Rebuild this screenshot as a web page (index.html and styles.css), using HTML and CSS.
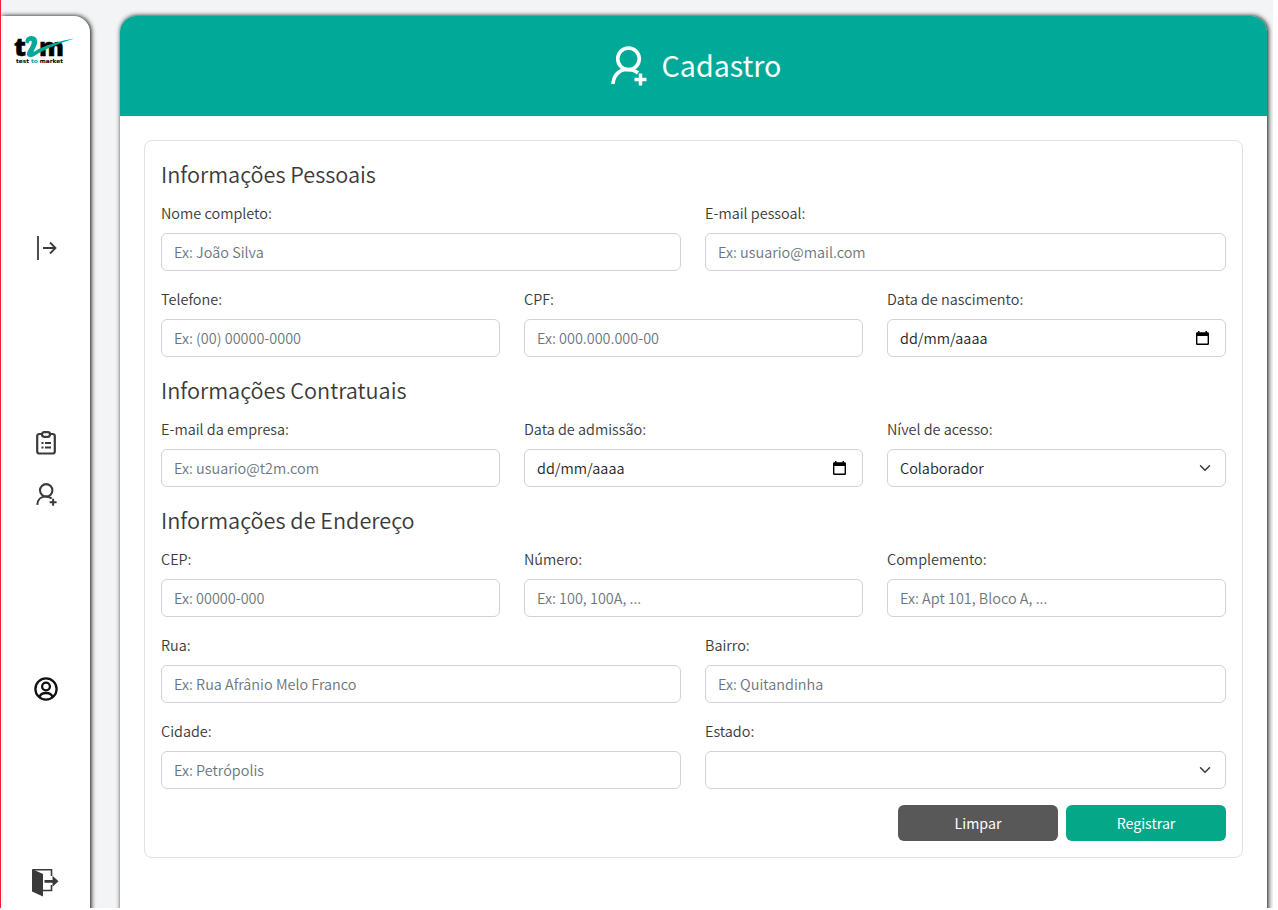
FILE: index.html
```html
<!DOCTYPE html>
<html lang="pt-BR">
<head>
<meta charset="utf-8">
<title>Cadastro</title>
<link rel="stylesheet" href="styles.css">
</head>
<body>
<svg class="defs" width="0" height="0">
  <symbol id="user-add" viewBox="0 0 36 40">
    <g fill="none" stroke="currentColor">
      <circle cx="17.5" cy="12.8" r="10.8" stroke-width="3.6"/>
      <path d="M2 38C2.500 29 8.500 23.500 16 23.500C20.500 23.500 24 24.500 27 27" stroke-width="3.6"/>
      <path d="M29.500 27.500v12M23.500 33.500h12" stroke-width="3.400"/>
    </g>
  </symbol>
  <symbol id="calendar" viewBox="0 0 13 14">
    <path fill="#000" fill-rule="evenodd" d="M2 0h1.500v1.200h6V0H11v1.200h.7Q13 1.200 13 2.500v10.200Q13 14 11.700 14H1.300Q0 14 0 12.700V2.500Q0 1.200 1.300 1.200H2zM1.400 5v7.600h10.200V5z"/>
  </symbol>
  <symbol id="chevron" viewBox="0 0 16 16">
    <path d="M2 5l6 6 6-6" fill="none" stroke="#343a40" stroke-width="2" stroke-linecap="round" stroke-linejoin="round"/>
  </symbol>
</svg>
<div class="app">
  <nav class="sidebar">
    <svg class="logo" width="62" height="30" viewBox="0 0 62 30">
      <text class="logo-name" x="0" y="19.500" textLength="12" lengthAdjust="spacingAndGlyphs">t</text>
      <text class="logo-name" x="25" y="19.500" textLength="25" lengthAdjust="spacingAndGlyphs">m</text>
      <path fill="#00a998" d="M11.500 4.500C12 1.500 14.500 0 17.500 0C21.500 0 24 3 23 7.500C22.200 11 20 13.500 19.500 16C32 8.500 46 5 60.500 2.500C46 7 33 12 21 19.500C17 22 12.500 21.500 13 17.500C13.500 14 18 9.500 17.700 6C17.300 3.800 15 4.500 14.500 7.500C12.500 7.500 11.300 6.500 11.500 4.500z"/>
      <text class="logo-tag" x="2" y="27" textLength="47" lengthAdjust="spacingAndGlyphs">test <tspan fill="#00a998">to</tspan> market</text>
    </svg>
    <svg class="icon-expand" width="20" height="24" viewBox="0 0 20 24" fill="none" stroke="#3a3a3a" stroke-width="1.800"><path d="M1 0v24M6 12h13M13 6.500l5.500 5.500-5.500 5.500"/></svg>
    <div class="menu">
      <svg width="20" height="24" viewBox="0 0 20 24" fill="none" stroke="#3a3a3a" stroke-width="2.200"><path d="M6 3H3.500Q1.200 3 1.200 5v15.500Q1.200 22.500 3.500 22.500h13q2.300 0 2.300-2V5q0-2-2.300-2H14"/><rect x="6" y="1.200" width="8" height="4.600" rx="2.200"/><path d="M5.500 12h2M9 12h6M5.500 16.500h2M9 16.500h6"/></svg>
      <svg class="icon-user" width="21" height="23"><use href="#user-add"/></svg>
    </div>
    <svg class="icon-profile" width="24" height="24" viewBox="0 0 24 24" fill="none" stroke="#111" stroke-width="2.300"><circle cx="12" cy="12" r="10.600"/><circle cx="12" cy="9.500" r="3.900"/><path d="M5.500 20C6.500 16.800 9 16 12 16s5.500.8 6.500 4"/></svg>
    <svg class="icon-exit" width="27" height="29" viewBox="0 0 27 29"><path fill="#3a3a3a" d="M0 1l11 5v22.500L0 23.500z"/><path d="M1 1.700h18.500V8M19.500 17v5.500H11" fill="none" stroke="#3a3a3a" stroke-width="1.600"/><path fill="#3a3a3a" d="M12.500 12H20.500V7.800l6 5.500-6 5.500v-4H12.500z"/></svg>
  </nav>
  <main class="panel">
    <header class="header">
      <svg width="36" height="40"><use href="#user-add"/></svg>
      <h1>Cadastro</h1>
    </header>
    <form class="form">
      <h2>Informações Pessoais</h2>
      <div class="row halves">
        <label>Nome completo:<input placeholder="Ex: João Silva"></label>
        <label>E-mail pessoal:<input placeholder="Ex: usuario@mail.com"></label>
      </div>
      <div class="row">
        <label>Telefone:<input placeholder="Ex: (00) 00000-0000"></label>
        <label>CPF:<input placeholder="Ex: 000.000.000-00"></label>
        <label>Data de nascimento:<span class="field date">dd/mm/aaaa<svg width="13" height="14"><use href="#calendar"/></svg></span></label>
      </div>
      <h2>Informações Contratuais</h2>
      <div class="row">
        <label>E-mail da empresa:<input placeholder="Ex: usuario@t2m.com"></label>
        <label>Data de admissão:<span class="field date">dd/mm/aaaa<svg width="13" height="14"><use href="#calendar"/></svg></span></label>
        <label>Nível de acesso:<span class="field">Colaborador<svg width="16" height="12"><use href="#chevron"/></svg></span></label>
      </div>
      <h2>Informações de Endereço</h2>
      <div class="row">
        <label>CEP:<input placeholder="Ex: 00000-000"></label>
        <label>Número:<input placeholder="Ex: 100, 100A, ..."></label>
        <label>Complemento:<input placeholder="Ex: Apt 101, Bloco A, ..."></label>
      </div>
      <div class="row halves">
        <label>Rua:<input placeholder="Ex: Rua Afrânio Melo Franco"></label>
        <label>Bairro:<input placeholder="Ex: Quitandinha"></label>
      </div>
      <div class="row halves">
        <label>Cidade:<input placeholder="Ex: Petrópolis"></label>
        <label>Estado:<span class="field"><svg width="16" height="12"><use href="#chevron"/></svg></span></label>
      </div>
      <div class="actions">
        <button class="clear" type="button">Limpar</button>
        <button class="submit" type="button">Registrar</button>
      </div>
    </form>
  </main>
</div>
</body>
</html>
```
FILE: styles.css
```css
* { box-sizing: border-box; }
body { margin: 0; background: #fff; color: #3a3a3a; font: 350 14.45px/24px "Noto Sans CJK JP", "Noto Sans", sans-serif; }
.defs { display: block; position: absolute; }
svg { display: block; flex: none; }
.app { display: flex; gap: 30px; width: 1273px; height: 908px; padding-top: 16px; overflow: hidden; background: #f3f4f6; border-left: 1px solid #f01f32; }
.sidebar { display: flex; flex-direction: column; align-items: center; width: 89px; height: 920px; flex: none; background: #fff; border-radius: 0 16px 0 0; box-shadow: 1px 0 5px #000; color: #3a3a3a; clip-path: inset(-16px -16px 0 0); }
.logo { margin: 20px 0 0 -1px; overflow: visible; }
.logo-name { font: 800 25px "Open Sans", sans-serif; fill: #000; stroke: #000; stroke-width: .4px; }
.logo-tag { font: 700 5.5px "DejaVu Sans", sans-serif; fill: #000; }
.icon-expand { margin: 170px 0 0 2px; }
.menu { display: flex; flex-direction: column; align-items: center; gap: 28px; margin-top: 171px; }
.icon-user { margin-left: 1px; }
.icon-profile { margin-top: 171px; }
.icon-exit { margin: 167px 0 0 0; }
.panel { width: 1147px; height: 920px; flex: none; background: #fff; border-radius: 16px 16px 0 0; box-shadow: 1px 0 5px #000; }
.header { display: flex; align-items: center; justify-content: center; gap: 15px; height: 100px; padding-left: 5px; color: #fff; background: #00a998; border-radius: 16px 16px 0 0; }
h1 { margin: 0; padding-bottom: 3px; font-size: 28.6px; font-weight: 400; line-height: 48px; }
.form { display: flex; flex-direction: column; gap: 16px; margin: 24px; width: 1099px; padding: 16px; border: 1px solid #dee2e6; border-radius: 8px; }
h2 { margin: 0 0 -8px; padding-bottom: 3px; font-size: 21.65px; font-weight: 350; line-height: 33px; }
.row { display: grid; grid-template-columns: repeat(3, 1fr); gap: 24px; }
.halves { grid-template-columns: 520px 521px; }
label { display: flex; flex-direction: column; gap: 8px; min-width: 0; }
input, .field { width: 100%; height: 38px; padding: 0 12px; border: 1px solid #ced4da; border-radius: 6px; background: #fff; font: inherit; color: #212529; }
input { padding-bottom: 2px; }
input::placeholder { color: #6c757d; opacity: 1; }
.field { display: flex; align-items: center; }
.field svg { margin-left: auto; }
.date svg { margin-right: 4px; }
.actions { display: flex; justify-content: flex-end; gap: 8px; }
button { width: 160px; height: 36px; padding: 0; border: 0; border-radius: 6px; color: #fff; font: inherit; font-size: 14.2px; font-weight: 400; }
.clear { background: #585858; }
.submit { background: #05a789; }
```
